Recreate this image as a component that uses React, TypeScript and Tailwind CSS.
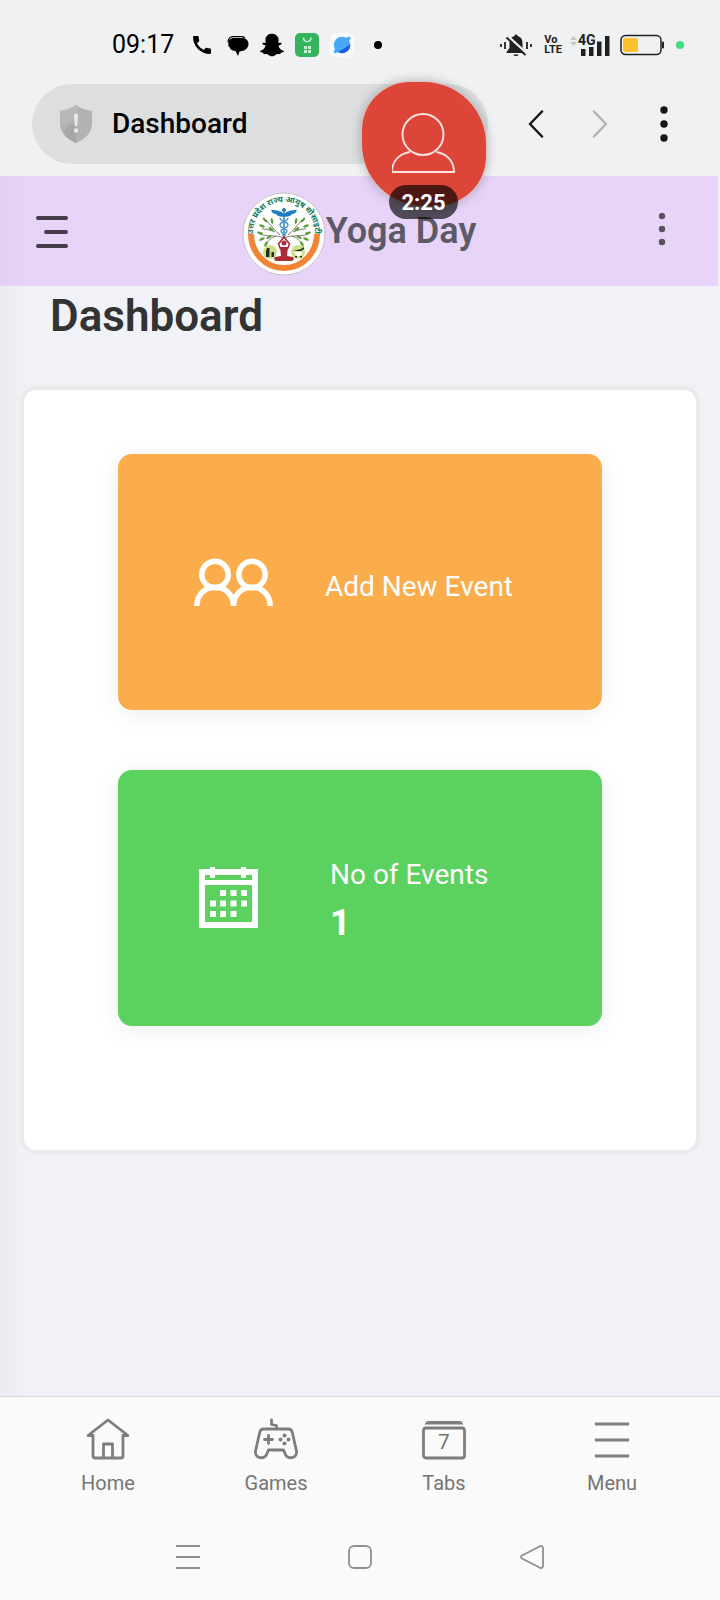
import type { ReactNode } from "react";
import { FaSnapchatGhost } from "react-icons/fa";
import { MdCall } from "react-icons/md";

function StatusBar() {
  return (
    <div className="flex h-21 items-center justify-between pt-1.5 pr-9 pl-28">
      <div className="flex items-center text-black">
        <span className="mr-4 text-[25px]">09:17</span>
        <MdCall className="mr-[11px] size-6" />
        <svg className="mr-[11px] size-6" viewBox="0 0 24 24" aria-hidden="true">
          <path
            d="M8 5h9c4 0 6.500 2.500 6.500 6s-3 6.500-6.500 7l-2.500.5L13 23l-2.500-5C7 18 5 16 4.500 14 3 13 3 11.500 3.500 10.500 3 8 4.500 5.500 8 5z"
            fill="#000"
          />
          <path d="M3 9.500C2.800 6 5 3.700 8 3.700h8c2 0 3 .3 4 1.300" fill="none" stroke="#000" strokeWidth="1.200" />
        </svg>
        <FaSnapchatGhost className="mr-[11px] size-6" />
        <svg className="mr-[11px] size-6" viewBox="0 0 24 24" aria-hidden="true">
          <rect width="24" height="24" rx="5" fill="#34b45c" />
          <path d="M8.500 4.500c0 5.500 7.500 5.500 7.500 0" fill="none" stroke="#c9f7d4" strokeWidth="1.400" />
          <path
            d="M9 13h3v3H9zM13 13h3v3h-3zM9 17h3v3H9zM13 17h3v3h-3z"
            fill="#c9f7d4"
          />
        </svg>
        <svg className="mr-5 size-6" viewBox="0 0 24 24" aria-hidden="true">
          <rect width="24" height="24" rx="6" fill="#f8fafc" />
          <circle cx="12" cy="12" r="8.200" fill="#4aa8fa" />
          <path d="M20.200 11a8.200 8.200 0 0 1-13 7.500C13 17 18 13 20.200 11z" fill="#1c5fe0" />
          <path d="M16 5c3-2 5.500-2 4 1.500C17 12 11 17.500 6 20c-3 .8-2.500-1.500-1-4" fill="#4aa8fa" />
        </svg>
        <span className="size-2 rounded-full bg-black" />
      </div>

      <div className="flex items-center">
        <svg className="mr-3 h-6 w-8" viewBox="0 0 32 24" aria-hidden="true">
          <path
            d="M1 11v3M5 9v7M27 9v7M31 11v3"
            stroke="#1f2123"
            strokeWidth="1.800"
            fill="none"
          />
          <path
            d="M16 1.500c1 0 1.500.7 1.500 1.500 3.500.8 5 3.500 5 7v5l3 4v1h-19v-1l3-4v-5c0-3.500 1.500-6.200 5-7 0-.8.500-1.500 1.500-1.500zM13.500 21.500h5c-.3 2-4.700 2-5 0z"
            fill="#1f2123"
          />
          <path d="M8 3.500l18.500 17" stroke="#eff1f3" strokeWidth="3" />
          <path d="M6.500 4.500l19 17.500" stroke="#1f2123" strokeWidth="2" />
        </svg>
        <span className="mr-2 flex flex-col text-[11px] leading-[10px] font-bold text-[#1f2123]">
          <span>Vo</span>
          <span>LTE</span>
        </span>
        <svg className="mr-2.5 h-6 w-10" viewBox="0 0 40 24" aria-hidden="true">
          <path d="M0 7l3.500-4L7 7zM0 9h7l-3.500 4z" fill="#c3c5c7" />
          <path
            d="M11 16h4.500v7H11zM19 14h4.500v9H19zM27 8.500h4.500V23H27zM35 3h4.500v20H35z"
            fill="#1f2123"
          />
          <text x="8" y="12" fontSize="14" fontWeight="700" fill="#1f2123">
            4G
          </text>
        </svg>
        <svg className="mr-3 h-6 w-11" viewBox="0 0 44 24" aria-hidden="true">
          <rect x="1" y="2.500" width="40" height="19" rx="4.500" fill="none" stroke="#1f2123" strokeWidth="1.500" />
          <rect x="3" y="5" width="15" height="14" rx="2" fill="#fcc12d" />
          <rect x="42" y="8.500" width="2" height="7" rx="1" fill="#1f2123" />
        </svg>
        <span className="size-2 rounded-full bg-[#42dc81]" />
      </div>
    </div>
  );
}

function BrowserBar() {
  return (
    <div className="flex h-23 items-start pr-10 pl-8">
      <label className="flex h-20 flex-1 items-center gap-[19px] rounded-full bg-[#dddee0] pl-[27px]">
        <svg className="h-[38px] w-[34px] shrink-0" viewBox="0 0 34 38" aria-hidden="true">
          <path d="M17 0c5 3.500 10 5 16 6v12c0 9-6 16-16 20C7 34 1 27 1 18V6c6-1 11-2.500 16-6z" fill="#b2b2b2" />
          <path d="M17 0c2 1.500 4 2.500 5 3-5 2-5 6-5 10-6 4-10 5-16 7V6c6-1 11-2.500 16-6z" fill="#b8b8b8" />
          <path d="M17 18v20C12 36 8 33 5 28c1-6 5-9 12-10z" fill="#a7a7a7" />
          <path d="M15 10c0-2 4-2 4 0l-.8 11h-2.400z" fill="#e8e8e8" />
          <circle cx="17" cy="25.500" r="2.200" fill="#e8e8e8" />
        </svg>
        <input
          aria-label="Address"
          defaultValue="Dashboard"
          className="w-full min-w-0 bg-transparent text-[28px] font-medium text-black outline-none"
        />
      </label>
      <div className="flex h-20 items-center">
        <button aria-label="Back" className="ml-9 flex size-6 items-center justify-center">
          <svg className="h-7 w-4" viewBox="0 0 16 28" fill="none" aria-hidden="true">
            <path d="M14 1.500L2 14l12 12.500" stroke="#151617" strokeWidth="2.500" strokeLinecap="round" strokeLinejoin="round" />
          </svg>
        </button>
        <button aria-label="Forward" className="ml-10 flex size-6 items-center justify-center">
          <svg className="h-7 w-4" viewBox="0 0 16 28" fill="none" aria-hidden="true">
            <path d="M2 1.500L14 14 2 26.500" stroke="#b2b4b6" strokeWidth="2.500" strokeLinecap="round" strokeLinejoin="round" />
          </svg>
        </button>
        <button aria-label="Browser options" className="ml-9 flex h-10 w-8 items-center justify-center">
          <svg className="h-9 w-2" viewBox="0 0 8 36" fill="#151617" aria-hidden="true">
            <circle cx="4" cy="4" r="3.700" />
            <circle cx="4" cy="18" r="3.700" />
            <circle cx="4" cy="32" r="3.700" />
          </svg>
        </button>
      </div>
    </div>
  );
}

function SocietyLogo() {
  return (
    <svg className="mt-1.5 size-21 shrink-0" viewBox="0 0 84 84" role="img" aria-label="Uttar Pradesh Rajya Ayush Society">
      <defs>
        <path id="logo-arc" d="M11 41a31 31 0 0 1 62 0" />
      </defs>
      <circle cx="42" cy="42" r="41" fill="#fff" stroke="#c9c3c9" strokeWidth="1" />
      <path d="M9 42a33 34 0 0 0 66 0" fill="none" stroke="#f28535" strokeWidth="6" />
      <text fontSize="8" fontWeight="700" fill="#14795a">
        <textPath href="#logo-arc" startOffset="50%" textAnchor="middle">
          उत्तर प्रदेश राज्य आयुष सोसाइटी
        </textPath>
      </text>
      {/* branches and leaves */}
      <g fill="none" stroke="#7a7d6c" strokeWidth="1">
        <path d="M41 46C36 42 28 46 18 42M38 43C32 38 28 32 24 28M33 40c-5-2-9-3-13-3M34 44c-5 2-8 4-10 9" />
        <path d="M43 46c5-4 13 0 23-4M46 43c6-5 10-11 14-15M51 40c5-2 9-3 13-3M50 44c5 2 8 4 10 9" />
      </g>
      <g fill="#5d9f3d">
        <ellipse cx="23" cy="28" rx="3" ry="1.300" transform="rotate(50 23 28)" />
        <ellipse cx="30" cy="29" rx="3" ry="1.300" transform="rotate(80 30 29)" />
        <ellipse cx="20" cy="34" rx="3" ry="1.300" transform="rotate(20 20 34)" />
        <ellipse cx="29" cy="37" rx="3" ry="1.300" transform="rotate(30 29 37)" />
        <ellipse cx="18" cy="41" rx="3" ry="1.300" transform="rotate(10 18 41)" />
        <ellipse cx="20" cy="47" rx="3" ry="1.300" transform="rotate(-25 20 47)" />
        <ellipse cx="27" cy="45" rx="3" ry="1.300" transform="rotate(-35 27 45)" />
        <ellipse cx="24" cy="52" rx="3" ry="1.300" transform="rotate(-60 24 52)" />
        <ellipse cx="61" cy="28" rx="3" ry="1.300" transform="rotate(-50 61 28)" />
        <ellipse cx="54" cy="29" rx="3" ry="1.300" transform="rotate(-80 54 29)" />
        <ellipse cx="64" cy="34" rx="3" ry="1.300" transform="rotate(-20 64 34)" />
        <ellipse cx="55" cy="37" rx="3" ry="1.300" transform="rotate(-30 55 37)" />
        <ellipse cx="66" cy="41" rx="3" ry="1.300" transform="rotate(-10 66 41)" />
        <ellipse cx="64" cy="47" rx="3" ry="1.300" transform="rotate(25 64 47)" />
        <ellipse cx="57" cy="45" rx="3" ry="1.300" transform="rotate(35 57 45)" />
        <ellipse cx="60" cy="52" rx="3" ry="1.300" transform="rotate(60 60 52)" />
      </g>
      {/* caduceus */}
      <g fill="#1f7cc0">
        <circle cx="42" cy="18" r="2" />
        <path d="M42 22c-3-3-7-4-13-4 1 3 3 4 5 4 1 2 4 3 8 2.500 4 .5 7-.5 8-2.500 2 0 4-1 5-4-6 0-10 1-13 4z" />
        <path d="M41.300 20h1.400v25h-1.400z" />
      </g>
      <path
        d="M38 26c0 4 8 3 8 7s-7 3-7 6 5 2 4 5M46 26c0 4-8 3-8 7s7 3 7 6-5 2-4 5"
        fill="none"
        stroke="#4b97cb"
        strokeWidth="1.400"
      />
      {/* mortar and bottles */}
      <circle cx="28" cy="60" r="7" fill="#cfe08c" />
      <circle cx="56" cy="60" r="7" fill="#cfe08c" />
      <path d="M25 56h2.500v9H24v-6zM29.500 60H32v5h-2.500z" fill="#23301f" />
      <path d="M51 59l8-2 3-2v2l-3 2h-8zM53 64h2v1.500h-2zM58 64h2v1.500h-2z" fill="#23301f" />
      <path d="M52 60h9l-3 4h-3z" fill="#fff" />
      {/* yoga pose */}
      <g fill="#a92b33">
        <circle cx="42" cy="51" r="2.500" />
        <path d="M38 55h8l-1 9 6 1c2 2 0 4-3 4H36c-3 0-5-2-3-4l6-1z" />
      </g>
      <path d="M38.500 57L36.500 52 42 45l5.500 7-2 5" fill="none" stroke="#a92b33" strokeWidth="1.600" />
    </svg>
  );
}

function SiteHeader() {
  return (
    <header className="mr-0.5 flex h-[110px] items-center justify-between bg-linear-to-r from-[#e3d0f4] to-[#e7d4f8] to-[28px] pr-11 pl-9">
      <button aria-label="Open menu">
        <svg className="h-9 w-8" viewBox="0 0 32 36" stroke="#453c47" strokeWidth="4" strokeLinecap="round" aria-hidden="true">
          <path d="M2 5h28M10 19h20M2 33h28" />
        </svg>
      </button>
      <a href="#home" className="flex items-center">
        <SocietyLogo />
        <span className="text-4xl font-semibold text-[#5b5a66]">Yoga Day</span>
      </a>
      <button aria-label="More options" className="flex w-6 justify-center">
        <svg className="h-9 w-2" viewBox="0 0 8 36" fill="#57545d" aria-hidden="true">
          <circle cx="4" cy="3" r="3.200" />
          <circle cx="4" cy="16" r="3.200" />
          <circle cx="4" cy="29" r="3.200" />
        </svg>
      </button>
    </header>
  );
}

function CallBubble() {
  return (
    <button
      aria-label="Ongoing call"
      className="absolute top-[82px] left-[362px] flex h-[124px] w-[124px] justify-center rounded-[48px_62px_50px_62px] bg-[#dc4538] shadow-[0_0_12px_rgba(0,0,0,0.3)] ring-1 ring-[#d9c4c0]"
    >
      <svg className="mt-7 h-16 w-16" viewBox="0 0 64 64" fill="none" stroke="#fbe4e0" strokeWidth="1.900" aria-hidden="true">
        <circle cx="31" cy="24.500" r="20.500" />
        <path d="M18 42C7 44 0 51 0 62h62c0-11-7-18-17.500-20" />
      </svg>
      <span className="absolute top-[103px] left-[27px] flex h-[34px] w-[69px] items-center justify-center rounded-full bg-black/65 text-[22px] font-bold text-white">
        2:25
      </span>
    </button>
  );
}

function PeopleIcon() {
  return (
    <svg className="h-12 w-20" viewBox="0 0 80 48" fill="none" stroke="#fff" strokeWidth="5.500" aria-hidden="true">
      <circle cx="21" cy="16.500" r="13.200" />
      <circle cx="58" cy="16.500" r="13.200" />
      <path d="M2.800 48C2.800 23 39.500 23 39.500 48 39.500 23 76.200 23 76.200 48" />
    </svg>
  );
}

function CalendarIcon() {
  return (
    <svg className="h-[62px] w-[59px]" viewBox="0 0 59 62" fill="#fff" aria-hidden="true">
      <path
        fillRule="evenodd"
        d="M0 2h11V0h5v2h26V0h5v2h12v59H0zM6 8v5h47V8h-6v3h-5V8H16v3h-5V8zM6 18v37h47V18z"
      />
      <path d="M21 23h6v6h-6zM31.500 23h6v6h-6zM42 23h6v6h-6zM11 33.500h6v6h-6zM21 33.500h6v6h-6zM31.500 33.500h6v6h-6zM42 33.500h6v6h-6zM11 44h6v6h-6zM21 44h6v6h-6zM31.500 44h6v6h-6z" />
    </svg>
  );
}

function Tab({ label, children }: { label: string; children: ReactNode }) {
  return (
    <a href={`#${label.toLowerCase()}`} className="flex flex-col items-center gap-2 text-xl text-[#757575]">
      <svg className="size-11" viewBox="0 0 44 44" fill="none" stroke="#7d7d7d" strokeWidth="2.800" strokeLinecap="round" strokeLinejoin="round" aria-hidden="true">
        {children}
      </svg>
      {label}
    </a>
  );
}

function BottomBar() {
  return (
    <footer className="border-t border-[#d9dadd] bg-[#fafafa]">
      <nav className="grid grid-cols-4 px-6 pt-5">
        <Tab label="Home">
          <path d="M7 18.500H2L22 3l20 15.500h-5V39a2 2 0 0 1-2 2H9a2 2 0 0 1-2-2zM17.500 41V27h9v14" />
        </Tab>
        <Tab label="Games">
          <path d="M17.500 3v4.500l5 1V12M9.500 12h25c2.500 0 3.300 1.300 3.800 3.500L42.500 34c1 8-9.500 9-11.500 2.500L29.500 33h-15L13 36.500C11 43 .500 42 1.500 34l4.200-18.500C6.200 13.300 7 12 9.500 12z" />
          <path d="M14.500 18.500v8M10.500 22.500h8" />
          <g fill="#7d7d7d" stroke="none">
            <circle cx="30.500" cy="18.500" r="2" />
            <circle cx="26.500" cy="22.500" r="2" />
            <circle cx="34.500" cy="22.500" r="2" />
            <circle cx="30.500" cy="26.500" r="2" />
          </g>
        </Tab>
        <Tab label="Tabs">
          <path d="M3 7.500c0-2 1.500-3.500 4-3.500h30c2.500 0 4 1.500 4 3.500z" fill="#7d7d7d" stroke="none" />
          <rect x="1.500" y="11" width="41" height="30" rx="2.500" />
          <text x="22" y="32" fontSize="21" textAnchor="middle" fill="#757575" stroke="none">
            7
          </text>
        </Tab>
        <Tab label="Menu">
          <path d="M6 7h32M6 23h32M6 39h32" />
        </Tab>
      </nav>

      <div className="mt-4 grid h-[87px] grid-cols-3 items-center justify-items-center px-[102px]">
        <button aria-label="Recent apps">
          <svg className="size-6" viewBox="0 0 24 24" stroke="#8f8f8f" strokeWidth="2" aria-hidden="true">
            <path d="M0 1h24M0 12h24M0 23h24" />
          </svg>
        </button>
        <button aria-label="Home screen">
          <svg className="size-6" viewBox="0 0 24 24" fill="none" stroke="#8f8f8f" strokeWidth="1.800" aria-hidden="true">
            <rect x="1" y="1" width="22" height="22" rx="5" />
          </svg>
        </button>
        <button aria-label="Back">
          <svg className="size-6" viewBox="0 0 24 24" fill="none" stroke="#8f8f8f" strokeWidth="1.800" aria-hidden="true">
            <path d="M20 1.200L2 10.500c-1.300.8-1.300 2.200 0 3l18 9.300c1.500.6 3-.2 3-1.800V3c0-1.600-1.500-2.400-3-1.800z" />
          </svg>
        </button>
      </div>
    </footer>
  );
}

export default function App() {
  return (
    <div className="relative flex min-h-screen flex-col bg-[#eff1f3] font-[Roboto,'Noto_Sans',sans-serif]">
      <StatusBar />
      <BrowserBar />
      <SiteHeader />

      <main className="flex-1 bg-linear-to-r from-[#ebecf1] to-[#f1f2f8] to-[28px] px-5 pb-10">
        <h1 className="pt-1 pl-[30px] text-[44px] leading-[52px] font-semibold text-[#333]">Dashboard</h1>

        <section className="mt-11 flex flex-col gap-15 rounded-2xl border-4 border-[#e9eaea] bg-white px-[94px] pt-16 pb-[124px]">
          <a
            href="#add-event"
            className="flex h-64 items-center rounded-[14px] bg-[#fbad4c] pl-19 text-[28px] text-white shadow-[0_4px_24px_rgba(0,0,0,0.07)]"
          >
            <PeopleIcon />
            <span className="pt-2.5 pl-[51px]">Add New Event</span>
          </a>
          <a
            href="#events"
            className="flex h-64 items-center rounded-[14px] bg-[#5bd15f] pl-[81px] text-[28px] text-white shadow-[0_4px_24px_rgba(0,0,0,0.07)]"
          >
            <CalendarIcon />
            <span className="flex flex-col pt-0.5 pl-[72px]">
              <span className="leading-12">No of Events</span>
              <strong className="text-4xl leading-12 font-bold">1</strong>
            </span>
          </a>
        </section>
      </main>

      <BottomBar />
      <CallBubble />
    </div>
  );
}
